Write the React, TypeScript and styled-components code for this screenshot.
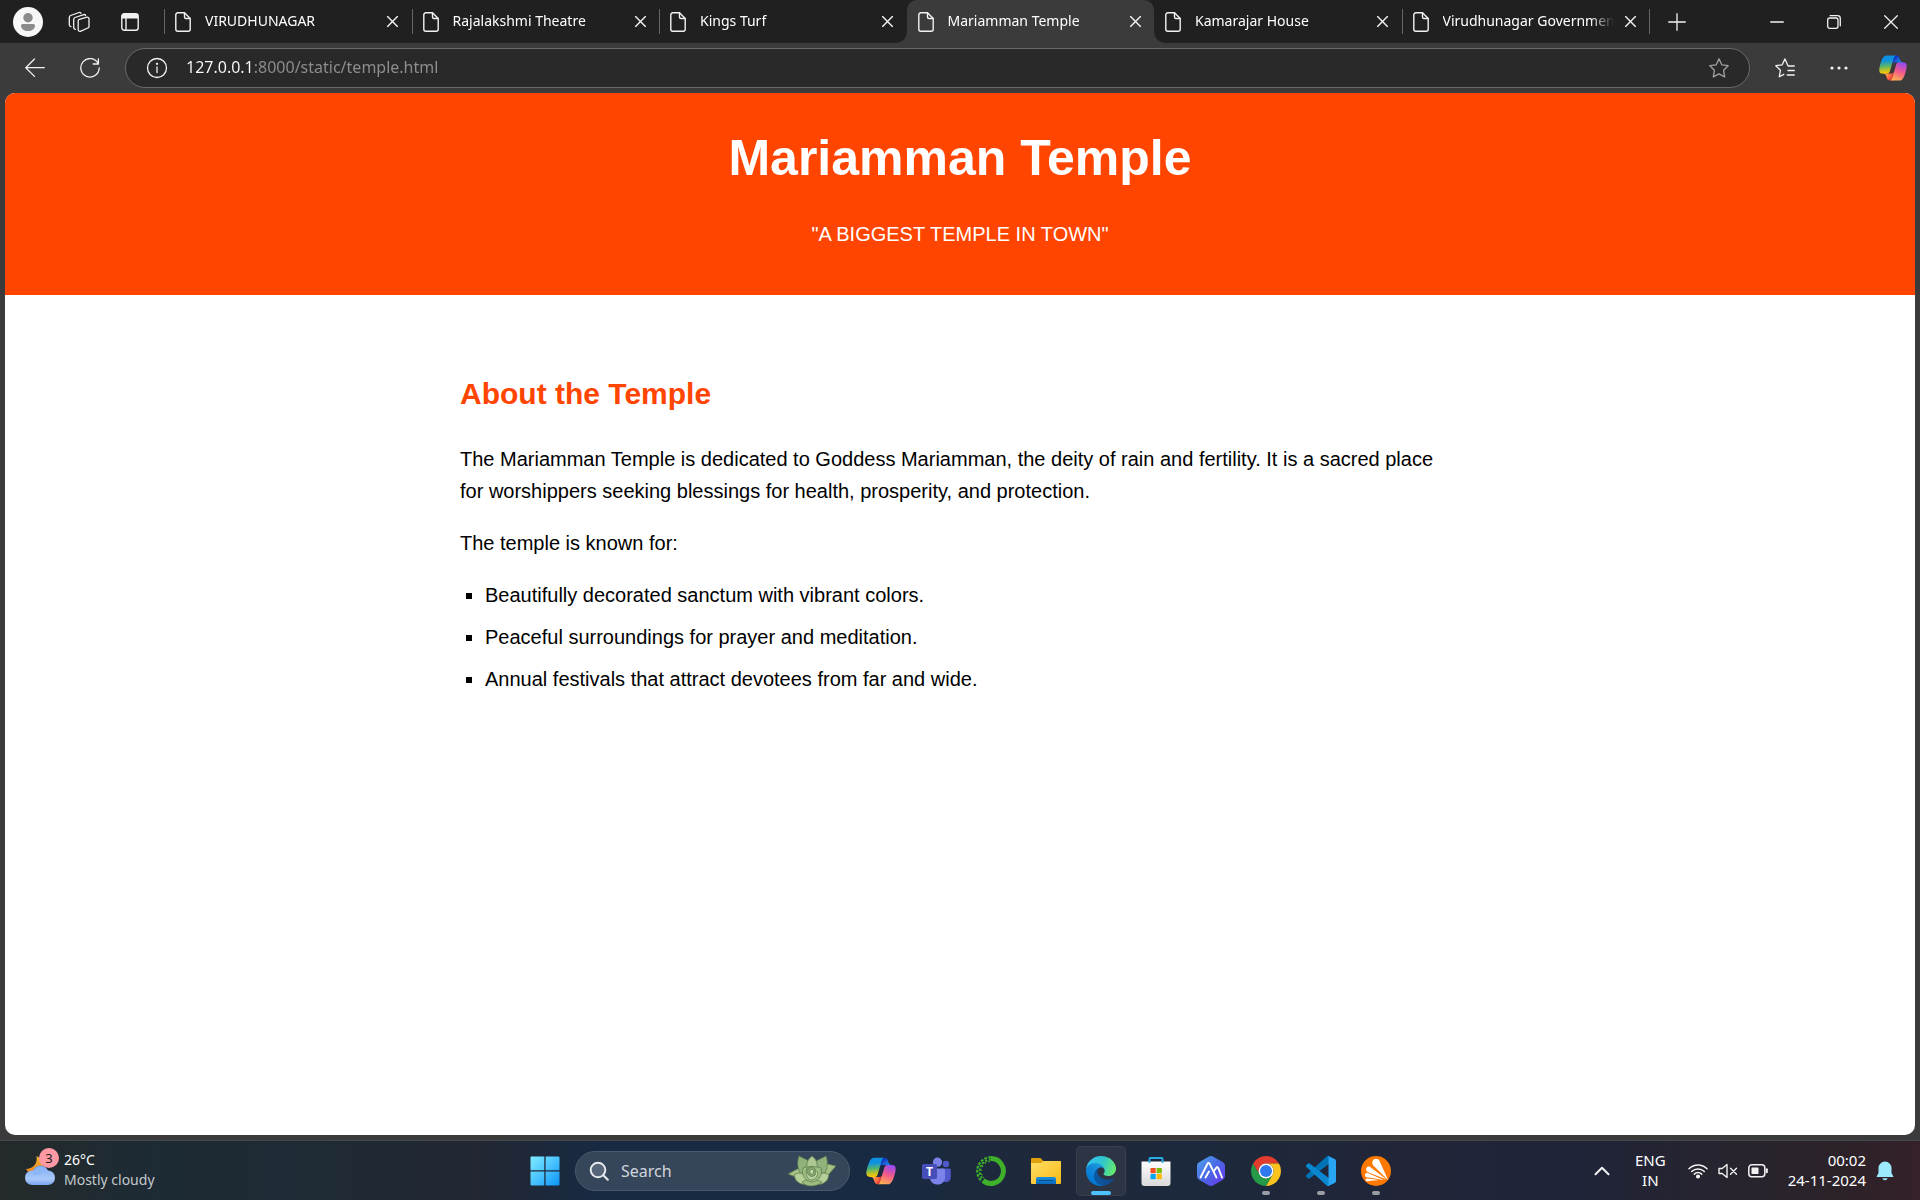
import React from "react";
import styled, { createGlobalStyle, css } from "styled-components";

const ui = `"Noto Sans", "Open Sans", sans-serif`;

const GlobalStyle = createGlobalStyle`
  *, *::before, *::after { box-sizing: border-box; }
  body { margin: 0; background: #3b3b3b; }
  button { border: 0; padding: 0; background: none; color: inherit; font: inherit; cursor: pointer; }
  input { border: 0; padding: 0; outline: 0; background: none; font: inherit; }
  svg { display: block; flex: none; }
`;

/* ---------- layout ---------- */

const Desktop = styled.div`
  display: flex;
  flex-direction: column;
  min-height: 100vh;
  background: #3b3b3b;
  color: #fff;
  font-family: ${ui};
`;

/* ---------- tab strip ---------- */

const TabStrip = styled.header`
  display: flex;
  height: 43px;
  background: #202020;
`;

const StripStart = styled.div`
  display: flex;
  align-items: center;
  flex: 0 0 164px;
  padding-left: 13px;
  gap: 21px;
`;

const Tabs = styled.div`
  display: flex;
  flex: 1;
  min-width: 0;
`;

const StripEnd = styled.div`
  display: flex;
  align-items: center;
  flex: 0 0 270px;
  justify-content: space-between;
  padding-right: 1px;
`;

const WindowControls = styled.div`
  display: flex;
  height: 100%;
`;

const SquareButton = styled.button<{ $w?: number }>`
  display: flex;
  align-items: center;
  justify-content: center;
  width: ${(p) => p.$w ?? 30}px;
  height: 100%;
`;

const curve = css`
  content: "";
  position: absolute;
  bottom: 0;
  width: 10px;
  height: 10px;
`;

const Tab = styled.div<{ $active?: boolean; $line?: boolean }>`
  position: relative;
  display: flex;
  align-items: center;
  flex: 1 1 0;
  min-width: 0;
  padding: 0 7px 0 11px;
  ${(p) =>
    p.$active
      ? css`
          background: #3b3b3b;
          border-radius: 10px 10px 0 0;
          z-index: 1;
          &::before {
            ${curve}
            right: 100%;
            background: radial-gradient(circle at 0 0, transparent 9px, #3b3b3b 10px);
          }
          &::after {
            ${curve}
            left: 100%;
            background: radial-gradient(circle at 100% 0, transparent 9px, #3b3b3b 10px);
          }
        `
      : p.$line &&
        css`
          &::before {
            content: "";
            position: absolute;
            left: 0;
            top: 9px;
            width: 1px;
            height: 25px;
            background: #666;
          }
        `}
`;

const LastLine = styled.span`
  width: 1px;
  height: 25px;
  margin-top: 9px;
  background: #666;
`;

const TabButton = styled.button`
  display: flex;
  align-items: center;
  flex: 1;
  min-width: 0;
  height: 100%;
  gap: 14px;
  text-align: left;
  font-size: 14px;
  line-height: 20px;
`;

const TabTitle = styled.span`
  flex: 1;
  min-width: 0;
  margin-right: 4px;
  padding-bottom: 2px;
  overflow: hidden;
  white-space: nowrap;
  mask-image: linear-gradient(90deg, #000 calc(100% - 24px), transparent);
`;

const TabClose = styled.button`
  display: flex;
  align-items: center;
  justify-content: center;
  width: 24px;
  height: 24px;
`;

/* ---------- toolbar ---------- */

const Toolbar = styled.nav`
  display: flex;
  align-items: center;
  height: 50px;
`;

const NavButtons = styled.div`
  display: flex;
  flex: 0 0 125px;
  height: 100%;
  padding-left: 20px;
  gap: 25px;
`;

const AddressBar = styled.form`
  display: flex;
  align-items: center;
  flex: 1;
  min-width: 0;
  height: 40px;
  padding: 0 20px;
  gap: 18px;
  border: 1px solid #6a6a6a;
  border-radius: 20px;
  background: #292929;
`;

const AddressInput = styled.input`
  flex: 1;
  min-width: 0;
  height: 30px;
  padding-bottom: 2px;
  font-size: 16px;
  color: #8f8f8f;
  background: linear-gradient(90deg, #fff 68px, #8f8f8f 68px);
  background-clip: text;
  -webkit-text-fill-color: transparent;
`;

const ToolbarEnd = styled.div`
  display: flex;
  align-items: center;
  justify-content: flex-end;
  flex: 0 0 170px;
  height: 100%;
  padding-right: 12px;
  gap: 24px;
`;

/* ---------- web page ---------- */

const Page = styled.main`
  flex: 1;
  margin: 0 5px 5px;
  border-radius: 10px;
  overflow: hidden;
  background: #fff;
  color: #000;
  font: 20px/32px Arial, "Liberation Sans", sans-serif;
`;

const Hero = styled.header`
  padding: 25px;
  background: #ff4500;
  color: #fff;
  text-align: center;
  h1 {
    margin: 0;
    font-size: 50px;
    line-height: 80px;
  }
  p {
    margin: 20px 0;
  }
`;

const About = styled.section`
  max-width: 1000px;
  margin: 0 auto;
  padding-top: 75px;
  h2 {
    margin: 0 0 25px;
    font-size: 30px;
    line-height: 48px;
    color: #ff4500;
  }
  p {
    margin: 0 0 20px;
  }
  ul {
    margin: 0;
    padding-left: 25px;
    list-style: square;
  }
  li {
    margin-bottom: 10px;
  }
`;

/* ---------- taskbar ---------- */

const Taskbar = styled.footer`
  display: grid;
  grid-template-columns: 1fr auto 1fr;
  align-items: center;
  height: 60px;
  border-top: 1px solid #43484d;
  background: linear-gradient(
    90deg,
    #242a2a 0%,
    #1d2b35 8%,
    #1f2a35 18%,
    #222733 25%,
    #182a42 31%,
    #182a42 45%,
    #20283a 55%,
    #1c293c 62%,
    #222538 73%,
    #1f2438 82%,
    #26242f 89%,
    #2c2229 96%,
    #35212a 100%
  );
  font-size: 15px;
  line-height: 20px;
`;

const Weather = styled.button`
  display: flex;
  align-items: center;
  justify-self: start;
  padding-left: 24px;
  gap: 8px;
  text-align: left;
`;

const WeatherIcon = styled.span`
  position: relative;
  width: 32px;
  height: 32px;
`;

const Badge = styled.span`
  position: absolute;
  top: -7px;
  right: -3px;
  width: 20px;
  height: 20px;
  border-radius: 50%;
  background: #ff99a4;
  color: #1a1a1a;
  font-size: 13px;
  text-align: center;
`;

const Lines = styled.span<{ $align?: string; $size?: number }>`
  display: flex;
  flex-direction: column;
  padding-bottom: 2px;
  text-align: ${(p) => p.$align ?? "left"};
  font-size: ${(p) => p.$size ?? 15}px;
  white-space: nowrap;
`;

const Soft = styled.span`
  color: #c3c8cc;
`;

const Dock = styled.div`
  display: flex;
  align-items: center;
`;

const SearchBox = styled.label`
  display: flex;
  align-items: center;
  width: 275px;
  height: 40px;
  margin: 0 3px;
  padding: 0 13px;
  gap: 12px;
  border: 1px solid #4b5a6c;
  border-radius: 20px;
  background: #36465a;
  input {
    flex: 1;
    min-width: 0;
    font-size: 16px;
    color: #fff;
  }
  input::placeholder {
    color: #d0d5db;
  }
`;

const DockSlot = styled.div`
  display: flex;
  justify-content: center;
  width: 55px;
`;

const DockButton = styled.button<{ $state?: "active" | "open" }>`
  position: relative;
  display: flex;
  align-items: center;
  justify-content: center;
  width: 50px;
  height: 50px;
  border-radius: 5px;
  ${(p) =>
    p.$state === "active" &&
    css`
      background: #2d3545;
      box-shadow: inset 0 0 0 1px #373f4e;
    `}
  ${(p) =>
    p.$state &&
    css`
      &::after {
        content: "";
        position: absolute;
        bottom: 1px;
        width: ${p.$state === "active" ? 20 : 8}px;
        height: 4px;
        border-radius: 2px;
        background: ${p.$state === "active" ? "#4cc2ff" : "#9b9ba5"};
      }
    `}
`;

const Tray = styled.div`
  display: flex;
  align-items: center;
  justify-self: end;
  padding-right: 26px;
`;

const TrayButton = styled.button<{ $ml?: number }>`
  display: flex;
  align-items: center;
  gap: 10px;
  margin-left: ${(p) => p.$ml ?? 0}px;
`;

/* ---------- icons ---------- */

type SvgProps = React.SVGProps<SVGSVGElement> & { box?: string };

const Line = ({ box = "0 0 20 20", children, ...rest }: SvgProps) => (
  <svg
    viewBox={box}
    fill="none"
    stroke="#f2f2f2"
    strokeWidth="1.3"
    strokeLinecap="round"
    strokeLinejoin="round"
    aria-hidden="true"
    {...rest}
  >
    {children}
  </svg>
);

const ProfileIcon = () => (
  <svg width="30" height="30" viewBox="0 0 30 30" aria-hidden="true">
    <circle cx="15" cy="15" r="15" fill="#f7f7f7" />
    <circle cx="15" cy="10.700" r="4.700" fill="#8b8b8b" />
    <path d="M9.500 17h11a1.500 1.500 0 0 1 1.500 1.500c0 3.500-3 5.500-7 5.500s-7-2-7-5.500A1.500 1.500 0 0 1 9.500 17z" fill="#8b8b8b" />
  </svg>
);

const WorkspacesIcon = () => (
  <Line width="22" height="22" box="0 0 22 22">
    <path d="M11.400 8.400 18.800 6.200a1.700 1.700 0 0 1 2.200 1.600v7.600a1.700 1.700 0 0 1-1.200 1.600L12.400 20.300a1.700 1.700 0 0 1-2.200-1.600V10a1.700 1.700 0 0 1 1.200-1.600z" />
    <path d="M7.400 18.300A2 2 0 0 1 5.700 16.400V8.400A2 2 0 0 1 7 6.500L15.700 3.600a1.600 1.600 0 0 1 1.900.8" />
    <path d="M3 15.700A2 2 0 0 1 1.300 13.800V6.400a2 2 0 0 1 1.300-1.900L11 1.500a1.600 1.600 0 0 1 1.900.8" />
  </Line>
);

const TabActionsIcon = () => (
  <svg width="18" height="18" viewBox="0 0 18 18" aria-hidden="true">
    <rect x=".8" y=".8" width="16.400" height="16.400" rx="2.500" fill="none" stroke="#f2f2f2" strokeWidth="1.400" />
    <path d="M.8 5.500V3A2.500 2.500 0 0 1 3.300.5h11.400A2.500 2.500 0 0 1 17.200 3v2.500z" fill="#f2f2f2" />
    <path d="M5 5v12" stroke="#f2f2f2" strokeWidth="1.400" />
  </svg>
);

const FileIcon = () => (
  <Line width="16" height="20" box="0 0 16 20" strokeWidth="1.400">
    <path d="M9.500.8H2.800a2 2 0 0 0-2 2v14.400a2 2 0 0 0 2 2h10.400a2 2 0 0 0 2-2V6.500z" />
    <path d="M9.500.8v4.200a1.500 1.500 0 0 0 1.500 1.500h4.200" />
  </Line>
);

const CrossIcon = ({ size = 11 }: { size?: number }) => (
  <Line width={size} height={size} box="0 0 10 10" strokeWidth={size > 11 ? 0.9 : 1.3}>
    <path d="M.5.5l9 9M9.500.5l-9 9" />
  </Line>
);

const CopilotIcon = ({ size, id }: { size: number; id: string }) => (
  <svg width={size} height={size} viewBox="0 0 48 48" aria-hidden="true">
    <defs>
      <radialGradient id={`${id}a`} cx="0" cy="0" r="1" gradientTransform="matrix(-10.960 -13.389 12.590 -10.306 38.005 20.514)" gradientUnits="userSpaceOnUse">
        <stop offset=".1" stopColor="#00aeff" />
        <stop offset=".77" stopColor="#2253ce" />
        <stop offset="1" stopColor="#0736c4" />
      </radialGradient>
      <radialGradient id={`${id}b`} cx="0" cy="0" r="1" gradientTransform="rotate(51.840 -28.201 27.850) scale(15.991 15.512)" gradientUnits="userSpaceOnUse">
        <stop stopColor="#ffb657" />
        <stop offset=".63" stopColor="#ff5f3d" />
        <stop offset=".92" stopColor="#c02b3c" />
      </radialGradient>
      <linearGradient id={`${id}c`} x1="12.500" y1="7.500" x2="14.800" y2="33.900" gradientUnits="userSpaceOnUse">
        <stop offset=".16" stopColor="#0d91e1" />
        <stop offset=".49" stopColor="#52b471" />
        <stop offset=".65" stopColor="#98bd42" />
        <stop offset=".94" stopColor="#ffc800" />
      </linearGradient>
      <radialGradient id={`${id}d`} cx="0" cy="0" r="1" gradientTransform="rotate(109.274 16.301 20.802) scale(38.387 45.987)" gradientUnits="userSpaceOnUse">
        <stop offset=".07" stopColor="#8c48ff" />
        <stop offset=".5" stopColor="#f2598a" />
        <stop offset=".9" stopColor="#ffb152" />
      </radialGradient>
    </defs>
    <path fill={`url(#${id}a)`} d="M34.142 7.325A4.630 4.630 0 0 0 29.700 4h-1.350a4.630 4.630 0 0 0-4.554 3.794L21.480 20.407l.575-1.965a4.630 4.630 0 0 1 4.444-3.330h7.853l3.294 1.282 3.175-1.283h-.926a4.630 4.630 0 0 1-4.443-3.325z" />
    <path fill={`url(#${id}b)`} d="M14.330 40.656A4.630 4.630 0 0 0 18.779 44h2.870a4.630 4.630 0 0 0 4.629-4.510l.312-12.163-.654 2.233a4.630 4.630 0 0 1-4.443 3.329h-7.919l-2.823-1.532-3.057 1.532h.912a4.630 4.630 0 0 1 4.447 3.344z" />
    <path fill={`url(#${id}c)`} d="M29.500 4H13.460c-4.583 0-7.332 6.057-9.165 12.113C2.123 23.290-.720 32.885 7.502 32.885h6.925a4.630 4.630 0 0 0 4.456-3.358a2078 2078 0 0 1 4.971-17.156c.843-2.843 1.544-5.284 2.621-6.805C27.080 4.714 28.086 4 29.500 4" />
    <path fill={`url(#${id}d)`} d="M18.498 44h16.040c4.582 0 7.332-6.058 9.165-12.115 2.171-7.177 5.013-16.775-3.208-16.775h-6.926a4.630 4.630 0 0 0-4.455 3.358a2084 2084 0 0 1-4.972 17.160c-.842 2.842-1.544 5.283-2.620 6.805-.604.852-1.610 1.567-3.024 1.567" />
  </svg>
);

const MostlyCloudyIcon = () => (
  <svg width="32" height="32" viewBox="0 0 32 32" aria-hidden="true">
    <defs>
      <linearGradient id="cloud" x1="0" y1="0" x2="0" y2="1">
        <stop offset="0" stopColor="#8fb8f5" />
        <stop offset=".6" stopColor="#a9c8fa" />
        <stop offset="1" stopColor="#7aa6ee" />
      </linearGradient>
      <linearGradient id="moon" x1="0" y1="0" x2="0" y2="1">
        <stop offset="0" stopColor="#f8b92c" />
        <stop offset="1" stopColor="#ee7f1b" />
      </linearGradient>
    </defs>
    <path d="M12.500 1c5 2 8 8 5 14-4 6-12 5-15.500-1C8.500 14 14 9 12.500 1z" fill="url(#moon)" />
    <circle cx="16.500" cy="18.500" r="8" fill="#6fa0ee" />
    <rect x="1" y="15.500" width="30" height="14.500" rx="7.200" fill="url(#cloud)" />
    <path d="M9 20a8 8 0 0 1 7-8.500 8 8 0 0 1 8 5c-4-1-6 0-8 3" fill="#8db6f6" />
  </svg>
);

const WindowsIcon = () => (
  <svg width="30" height="30" viewBox="0 0 30 30" aria-hidden="true">
    <defs>
      <linearGradient id="win" x1="0" y1="0" x2="1" y2="1">
        <stop offset="0" stopColor="#7fecff" />
        <stop offset=".5" stopColor="#49c3ff" />
        <stop offset="1" stopColor="#0c93f5" />
      </linearGradient>
    </defs>
    <path d="M1.500.5H14.300V14.300H.5V1.500a1 1 0 0 1 1-1zM15.600.5h12.900a1 1 0 0 1 1 1V14.300H15.600zM.5 15.600H14.300v13.900H1.500a1 1 0 0 1-1-1zM15.600 15.600h13.900v12.900a1 1 0 0 1-1 1H15.600z" fill="url(#win)" />
  </svg>
);

const SucculentIcon = () => (
  <svg width="48" height="32" viewBox="0 0 48 32" aria-hidden="true">
    <g stroke="#56794c" strokeWidth=".7" strokeLinejoin="round">
      <path d="M0 19 13 12l9 13-14 1 2-3z" fill="#a5c183" />
      <path d="M48 11 36 8 27 24l12 2 2-7z" fill="#a5c183" />
      <path d="M11 1l10 5 2 14-10-1C9 13 9 7 11 1z" fill="#90b27b" />
      <path d="M38 1 28 6l-3 13 12-1c3-6 3-12 1-17z" fill="#90b27b" />
      <path d="M24 1c4 3 6 7 5 13H19c-1-6 1-10 5-13z" fill="#adc790" />
      <path d="M6 20c6-4 12-2 16 8-7 3-14 1-16-8z" fill="#b6ce97" />
      <path d="M41 20c-6-4-12-2-16 8 7 3 14 1 16-8z" fill="#b6ce97" />
      <path d="M14 27c4-3 14-3 20 0-3 3-8 4-11 4s-7-1-9-4z" fill="#9fbd7f" />
      <path d="M15 13c5-2 13-2 18 0 2 7-2 13-9 14-7-1-11-7-9-14z" fill="#9dbc80" />
      <path d="M19 13c4 0 8 1 11 5-1 5-4 7-7 7-4-1-6-6-4-12z" fill="#b9d19d" />
      <path d="M22 12c4-1 7 3 5 8-3 3-7 1-8-3 0-2 1-4 3-5z" fill="#86a96f" />
      <path d="M22 15c3-2 5 1 3 4-2 1-4-1-3-4z" fill="#c1d7a5" />
    </g>
  </svg>
);

const TeamsIcon = () => (
  <svg width="30" height="30" viewBox="0 0 30 30" aria-hidden="true">
    <circle cx="25" cy="8" r="3.200" fill="#5059c9" />
    <path d="M20 12.500h8.500a1.300 1.300 0 0 1 1.300 1.300v7.200c0 3-2 5-4.800 5s-5-2-5-5z" fill="#5059c9" />
    <circle cx="16.500" cy="6.200" r="4.600" fill="#7b83eb" />
    <path d="M9 12.500h13.500a1.500 1.500 0 0 1 1.500 1.500v7.500c0 4.300-3.300 7-7.500 7S9 25.800 9 21.500z" fill="#7b83eb" />
    <rect x="1" y="8" width="15" height="15" rx="1.400" fill="#464eb8" />
    <text x="8.500" y="19.500" textAnchor="middle" fill="#fff" fontFamily="Noto Sans, sans-serif" fontWeight="700" fontSize="12">T</text>
  </svg>
);

const AnacondaIcon = () => (
  <svg width="30" height="30" viewBox="0 0 30 30" fill="none" stroke="#3eb02a" aria-hidden="true">
    <path d="M15 2.600A12.400 12.400 0 1 1 7 24.500" strokeWidth="5" />
    <path d="M15 1.200A13.800 13.800 0 0 0 5.500 25" strokeWidth="2.200" strokeDasharray="2.800 1.300" />
    <path d="M15 3.600A11.400 11.400 0 0 0 7 23" strokeWidth="2" strokeDasharray="2.200 1.600" />
    <path d="M14 5.200A9.900 9.900 0 0 0 8 22" strokeWidth="1.300" strokeDasharray="1.800 2.400" />
  </svg>
);

const ExplorerIcon = () => (
  <svg width="30" height="30" viewBox="0 0 30 30" aria-hidden="true">
    <defs>
      <linearGradient id="folder" x1="0" y1="0" x2="1" y2="1">
        <stop offset="0" stopColor="#ffdf66" />
        <stop offset="1" stopColor="#f9b916" />
      </linearGradient>
      <linearGradient id="slot" x1="0" y1="0" x2="0" y2="1">
        <stop offset="0" stopColor="#1990e0" />
        <stop offset="1" stopColor="#0b68b9" />
      </linearGradient>
    </defs>
    <path d="M0 3a1 1 0 0 1 1-1h8.500l3 3H29a1 1 0 0 1 1 1v6H0z" fill="#e09f0c" />
    <path d="M0 7h10l3-2h16a1 1 0 0 1 1 1v21a1 1 0 0 1-1 1H1a1 1 0 0 1-1-1z" fill="url(#folder)" />
    <path d="M5 28v-5a2 2 0 0 1 2-2h16a2 2 0 0 1 2 2v5z" fill="url(#slot)" />
    <path d="M8.500 24.500h13" stroke="#084f8f" strokeWidth="1.200" strokeLinecap="round" />
  </svg>
);

const EdgeIcon = () => (
  <svg width="30" height="30" viewBox="0 0 256 256" aria-hidden="true">
    <defs>
      <linearGradient id="edgeA" x1="60" y1="178" x2="241" y2="178" gradientUnits="userSpaceOnUse">
        <stop offset="0" stopColor="#0c59a4" />
        <stop offset="1" stopColor="#114a8b" />
      </linearGradient>
      <linearGradient id="edgeB" x1="130" y1="60" x2="40" y2="220" gradientUnits="userSpaceOnUse">
        <stop offset="0" stopColor="#1b9de2" />
        <stop offset=".4" stopColor="#1488d8" />
        <stop offset="1" stopColor="#0078d4" />
      </linearGradient>
      <linearGradient id="edgeC" x1="20" y1="50" x2="240" y2="130" gradientUnits="userSpaceOnUse">
        <stop offset="0" stopColor="#35c1f1" />
        <stop offset=".5" stopColor="#2fc6cb" />
        <stop offset="1" stopColor="#66eb6e" />
      </linearGradient>
    </defs>
    <path fill="url(#edgeA)" d="M231 190.500c-3.400 1.800-6.900 3.400-10.500 4.700a101.500 101.500 0 0 1-35.900 6.500c-47.300 0-88.500-32.500-88.500-74.300a31.500 31.500 0 0 1 16.400-27.300c-42.800 1.800-53.800 46.400-53.800 72.500 0 73.900 68.100 81.400 82.800 81.400 7.900 0 19.800-2.300 27-4.600l1.300-.4a128.300 128.300 0 0 0 66.600-52.800 4 4 0 0 0-5.400-5.700z" />
    <path fill="url(#edgeB)" d="M105.700 241.400a79.200 79.200 0 0 1-22.700-21.300 80.700 80.700 0 0 1 29.500-120c3.200-1.500 8.500-4.100 15.600-4a32.400 32.400 0 0 1 25.700 13 31.900 31.900 0 0 1 6.300 18.700c0-.2 24.500-79.600-80-79.600-43.900 0-80 41.700-80 78.200a130.200 130.200 0 0 0 12.100 56 128 128 0 0 0 156.400 67 75.500 75.500 0 0 1-62.800-8z" />
    <path fill="url(#edgeC)" d="M152.300 148.900c-.9 1-3.400 2.500-3.400 5.600 0 2.600 1.700 5.200 4.800 7.300 14.300 10 41.400 8.600 41.500 8.600a59.600 59.600 0 0 0 30.300-8.300 61.400 61.400 0 0 0 30.400-52.900c.3-22.400-8-37.300-11.300-43.900C223.500 23.900 177.700 0 128 0A128 128 0 0 0 0 126.200c.5-36.500 36.800-66 80-66 3.500 0 23.500.3 42 10a72.600 72.600 0 0 1 30.900 29.300c6.100 10.600 7.200 24.100 7.200 29.500s-2.700 13.300-7.800 19.900z" />
  </svg>
);

const StoreIcon = () => (
  <svg width="30" height="30" viewBox="0 0 30 30" aria-hidden="true">
    <defs>
      <linearGradient id="bag" x1="0" y1="0" x2="0" y2="1">
        <stop offset="0" stopColor="#ffffff" />
        <stop offset="1" stopColor="#d9d9d9" />
      </linearGradient>
    </defs>
    <path d="M.5 5.500h29V27a3 3 0 0 1-3 3h-23a3 3 0 0 1-3-3z" fill="url(#bag)" />
    <path d="M8.400 7V3a1 1 0 0 1 1-1h11.200a1 1 0 0 1 1 1v4" fill="none" stroke="#28aeea" strokeWidth="1.800" />
    <path d="M9.500 12h5.200v5.200H9.500z" fill="#f25022" />
    <path d="M15.600 12h5.200v5.200h-5.200z" fill="#7fba00" />
    <path d="M9.500 18h5.200v5.200H9.500z" fill="#00a4ef" />
    <path d="M15.600 18h5.200v5.200h-5.200z" fill="#ffb900" />
  </svg>
);

const HexIcon = () => (
  <svg width="30" height="30" viewBox="0 0 30 30" aria-hidden="true">
    <defs>
      <linearGradient id="hex" x1="0" y1="0" x2="1" y2="1">
        <stop offset="0" stopColor="#4fa6ea" />
        <stop offset=".5" stopColor="#4a68e6" />
        <stop offset="1" stopColor="#6a33ea" />
      </linearGradient>
    </defs>
    <path d="M13 .6a4 4 0 0 1 4 0l10 5.700a4 4 0 0 1 2 3.500v10.400a4 4 0 0 1-2 3.500l-10 5.700a4 4 0 0 1-4 0L3 23.700a4 4 0 0 1-2-3.500V9.800a4 4 0 0 1 2-3.500z" fill="url(#hex)" />
    <g fill="none" stroke="#fff" strokeWidth="1.900" strokeLinecap="round" strokeLinejoin="round">
      <path d="M4.500 21.500 11.500 7.800c.6-1.200 1.600-1.200 2.200 0L20.500 21.500" />
      <path d="M9.500 21.500 13 15.500M18 15l2.300-3.200c.8-1 1.400-1 2 .2L26 21.500" />
    </g>
  </svg>
);

const ChromeIcon = () => (
  <svg width="30" height="30" viewBox="2 2 44 44" aria-hidden="true">
    <path fill="#e33b2e" d="M4.950 13A22 22 0 0 1 43.050 13H24A11 11 0 0 0 14.470 29.500z" />
    <path fill="#fcc31e" d="M43.050 13A22 22 0 0 1 24 46L33.530 29.500A11 11 0 0 0 24 13z" />
    <path fill="#259b48" d="M24 46A22 22 0 0 1 4.950 13L14.470 29.500A11 11 0 0 0 33.530 29.500z" />
    <circle cx="24" cy="24" r="11" fill="#fff" />
    <circle cx="24" cy="24" r="8.800" fill="#2f78ee" />
  </svg>
);

const CodeIcon = () => (
  <svg width="30" height="30" viewBox="0 0 100 100" aria-hidden="true">
    <path fill="#0073b7" d="M96.461 10.796 75.857.876a6.230 6.230 0 0 0-7.107 1.207l-67.451 61.500a4.167 4.167 0 0 0 .004 6.162l5.510 5.009a4.167 4.167 0 0 0 5.320.236l81.228-61.620c2.725-2.067 6.639-.124 6.639 3.297v-.240a6.250 6.250 0 0 0-3.539-5.630" />
    <path fill="#0a87d0" d="m96.461 89.204-20.604 9.920a6.230 6.230 0 0 1-7.107-1.207l-67.451-61.500a4.167 4.167 0 0 1 .004-6.162l5.510-5.009a4.167 4.167 0 0 1 5.320-.236l81.228 61.620c2.725 2.067 6.639.124 6.639-3.297v.240a6.250 6.250 0 0 1-3.539 5.630" />
    <path fill="#2aa5f2" d="M75.858 99.126a6.230 6.230 0 0 1-7.108-1.210c2.306 2.307 6.250.674 6.250-2.588V4.672c0-3.262-3.944-4.895-6.250-2.589a6.230 6.230 0 0 1 7.108-1.210l20.600 9.908A6.250 6.250 0 0 1 100 16.413v67.174a6.250 6.250 0 0 1-3.541 5.633z" />
  </svg>
);

const AvastIcon = () => (
  <svg width="30" height="30" viewBox="0 0 30 30" aria-hidden="true">
    <circle cx="15" cy="15" r="15" fill="#ff7800" />
    <g fill="#fff">
      <path d="M11.300 6.500C11.300 4.200 13 2.800 15 2.800s3.400 1.200 4 3.200L27.200 24.200 12.600 9.800c-.9-.9-1.300-2-1.300-3.300z" />
      <path d="M5.300 12.200c.5-1.500 2.300-2.200 3.900-1.300L25.600 23.600 7 16.200c-1.600-.7-2.300-2.400-1.700-4z" />
      <path d="M4 18.700c.2-1.200 1.300-1.900 2.600-1.600L23 23.900 5.800 21.300C4.500 21 3.800 19.900 4 18.700z" />
      <path d="M4.600 24c0-.9.700-1.500 1.600-1.400l12 1.300L6 25.300c-.8.100-1.400-.5-1.400-1.300z" />
    </g>
  </svg>
);

/* ---------- content ---------- */

const tabs = [
  { title: "VIRUDHUNAGAR" },
  { title: "Rajalakshmi Theatre" },
  { title: "Kings Turf" },
  { title: "Mariamman Temple", active: true },
  { title: "Kamarajar House" },
  { title: "Virudhunagar Government" },
];

const dock: { name: string; icon: React.ReactNode; state?: "active" | "open" }[] = [
  { name: "Copilot", icon: <CopilotIcon size={32} id="dock" /> },
  { name: "Teams", icon: <TeamsIcon /> },
  { name: "Anaconda", icon: <AnacondaIcon /> },
  { name: "File Explorer", icon: <ExplorerIcon /> },
  { name: "Edge", icon: <EdgeIcon />, state: "active" },
  { name: "Store", icon: <StoreIcon /> },
  { name: "Assistant", icon: <HexIcon /> },
  { name: "Chrome", icon: <ChromeIcon />, state: "open" },
  { name: "Visual Studio Code", icon: <CodeIcon />, state: "open" },
  { name: "Avast", icon: <AvastIcon />, state: "open" },
];

const features = [
  "Beautifully decorated sanctum with vibrant colors.",
  "Peaceful surroundings for prayer and meditation.",
  "Annual festivals that attract devotees from far and wide.",
];

export default function App() {
  return (
    <Desktop>
      <GlobalStyle />
      <TabStrip>
        <StripStart>
          <SquareButton aria-label="Profile"><ProfileIcon /></SquareButton>
          <SquareButton aria-label="Workspaces"><WorkspacesIcon /></SquareButton>
          <SquareButton aria-label="Tab actions"><TabActionsIcon /></SquareButton>
        </StripStart>
        <Tabs>
          {tabs.map((t, i) => (
            <Tab key={t.title} $active={t.active} $line={!tabs[i - 1]?.active}>
              <TabButton>
                <FileIcon />
                <TabTitle>{t.title}</TabTitle>
              </TabButton>
              <TabClose aria-label={`Close ${t.title}`}><CrossIcon /></TabClose>
            </Tab>
          ))}
          <LastLine />
        </Tabs>
        <StripEnd>
          <SquareButton $w={54} aria-label="New tab">
            <Line width="18" height="18" box="0 0 18 18"><path d="M9 .7v16.600M.7 9h16.600" /></Line>
          </SquareButton>
          <WindowControls>
            <SquareButton $w={57} aria-label="Minimize">
              <Line width="14" height="14" box="0 0 14 14"><path d="M.7 7h12.600" /></Line>
            </SquareButton>
            <SquareButton $w={57} aria-label="Restore">
              <Line width="14" height="14" box="0 0 14 14">
                <rect x=".7" y="3" width="10.300" height="10.300" rx="2" />
                <path d="M3.200.7h7.300a2.800 2.800 0 0 1 2.800 2.800v7.300" />
              </Line>
            </SquareButton>
            <SquareButton $w={57} aria-label="Close window"><CrossIcon size={14} /></SquareButton>
          </WindowControls>
        </StripEnd>
      </TabStrip>

      <Toolbar aria-label="Browser">
        <NavButtons>
          <SquareButton aria-label="Back">
            <Line width="20" height="20"><path d="M19.300 9.700H.8M9.500 1 .8 9.700l8.700 8.700" /></Line>
          </SquareButton>
          <SquareButton aria-label="Refresh">
            <Line width="20" height="20"><path d="M18.200 5.600A9.200 9.200 0 1 0 19.200 10M18.400.8v5.200h-5.200" /></Line>
          </SquareButton>
        </NavButtons>
        <AddressBar>
          <Line width="22" height="22" box="0 0 22 22">
            <circle cx="11" cy="11" r="9.500" />
            <path d="M11 10v5.500" />
            <circle cx="11" cy="6.800" r=".5" fill="#f2f2f2" />
          </Line>
          <AddressInput aria-label="Address" defaultValue="127.0.0.1:8000/static/temple.html" />
          <Line width="20" height="20" stroke="#a0a0a0">
            <path d="M10 .9l2.800 5.900 6.400.9-4.600 4.600 1.100 6.500L10 15.800l-5.700 3 1.100-6.500L.8 7.700l6.400-.9z" />
          </Line>
        </AddressBar>
        <ToolbarEnd>
          <SquareButton aria-label="Favorites">
            <Line width="20" height="20">
              <path d="M19.300 8h-6.200L10 .9 7.200 6.800.8 7.700l4.600 4.600-1.100 6.500 4.500-2.400M13 12.500h6.300M12.300 17h7" />
            </Line>
          </SquareButton>
          <SquareButton aria-label="Settings and more">
            <svg width="18" height="4" viewBox="0 0 18 4" fill="#f2f2f2" aria-hidden="true">
              <circle cx="2" cy="2" r="1.600" /><circle cx="9" cy="2" r="1.600" /><circle cx="16" cy="2" r="1.600" />
            </svg>
          </SquareButton>
          <SquareButton aria-label="Copilot"><CopilotIcon size={30} id="bar" /></SquareButton>
        </ToolbarEnd>
      </Toolbar>

      <Page>
        <Hero>
          <h1>Mariamman Temple</h1>
          <p>"A BIGGEST TEMPLE IN TOWN"</p>
        </Hero>
        <About>
          <h2>About the Temple</h2>
          <p>
            The Mariamman Temple is dedicated to Goddess Mariamman, the deity of rain and fertility. It is a sacred
            place for worshippers seeking blessings for health, prosperity, and protection.
          </p>
          <p>The temple is known for:</p>
          <ul>
            {features.map((f) => (
              <li key={f}>{f}</li>
            ))}
          </ul>
        </About>
      </Page>

      <Taskbar>
        <Weather>
          <WeatherIcon>
            <MostlyCloudyIcon />
            <Badge>3</Badge>
          </WeatherIcon>
          <Lines $size={14}>
            <span>26°C</span>
            <Soft>Mostly cloudy</Soft>
          </Lines>
        </Weather>
        <Dock>
          <DockSlot><DockButton aria-label="Start"><WindowsIcon /></DockButton></DockSlot>
          <SearchBox>
            <Line width="20" height="20" stroke="#e6e9ed" strokeWidth="2">
              <circle cx="9" cy="9" r="7.300" fill="#56657a" />
              <path d="M14.300 14.300l4.500 4.500" />
            </Line>
            <input type="text" placeholder="Search" aria-label="Search" />
            <SucculentIcon />
          </SearchBox>
          {dock.map((d) => (
            <DockSlot key={d.name}>
              <DockButton aria-label={d.name} $state={d.state}>{d.icon}</DockButton>
            </DockSlot>
          ))}
        </Dock>
        <Tray>
          <TrayButton aria-label="Show hidden icons">
            <Line width="16" height="10" box="0 0 16 10" strokeWidth="2"><path d="M1.500 8.200 8 1.700l6.500 6.500" /></Line>
          </TrayButton>
          <TrayButton $ml={25}>
            <Lines $align="center"><span>ENG</span><span>IN</span></Lines>
          </TrayButton>
          <TrayButton $ml={22} aria-label="Network, volume and battery">
            <Line width="20" height="16" box="0 0 20 16" strokeWidth="1.500">
              <path d="M1 5.800a12.700 12.700 0 0 1 18 0M3.700 8.500a8.900 8.900 0 0 1 12.600 0M6.300 11.100a5.200 5.200 0 0 1 7.400 0" />
              <circle cx="10" cy="13.500" r="1.300" fill="#f2f2f2" />
            </Line>
            <Line width="20" height="16" box="0 0 20 16" strokeWidth="1.400">
              <path d="M1 5.500h3.200L9 1.500v13l-4.800-4H1zM12.500 5.200l6 6M18.500 5.200l-6 6" />
            </Line>
            <Line width="20" height="16" box="0 0 20 16" strokeWidth="1.500">
              <rect x=".8" y="1.800" width="16" height="12" rx="3" />
              <rect x="3.500" y="4.500" width="7" height="6.600" rx=".6" fill="#f2f2f2" stroke="none" />
              <path d="M18.800 6.300v3" strokeWidth="2" />
            </Line>
          </TrayButton>
          <TrayButton $ml={20}>
            <Lines $align="right"><span>00:02</span><span>24-11-2024</span></Lines>
            <svg width="18" height="20" viewBox="0 0 18 20" fill="#9beaff" aria-label="Notifications">
              <path d="M9 .5A6.500 6.500 0 0 0 2.500 7v5L.8 15.300a.5.500 0 0 0 .5.800h15.400a.5.500 0 0 0 .5-.8L15.500 12V7A6.500 6.500 0 0 0 9 .5zM6.300 17.200a2.800 2.800 0 0 0 5.400 0z" />
            </svg>
          </TrayButton>
        </Tray>
      </Taskbar>
    </Desktop>
  );
}
